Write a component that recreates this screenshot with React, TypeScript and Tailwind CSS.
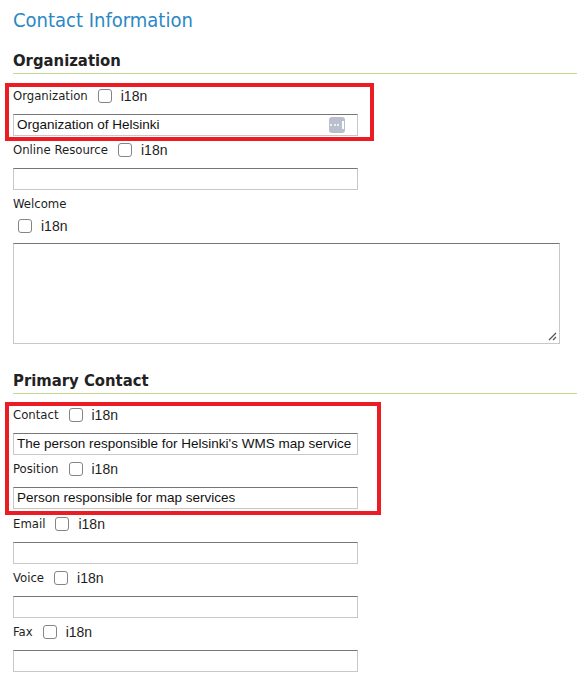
import React from "react";

const LABEL_FONT = "font-['DejaVu_Sans_Condensed','Liberation_Sans',sans-serif]";

function Check() {
  return <span className="inline-block w-[14px] h-[14px] rounded-[3px] border border-[#858585] bg-white" />;
}

function FieldLabel({ label }: { label: string }) {
  return (
    <div className={`flex items-center h-[18px] text-[13px] text-[#1e1e1e] ${LABEL_FONT}`}>
      <span>{label}</span>
      <span className="ml-[10px] mr-[9px] flex"><Check /></span>
      <span className="font-['Liberation_Sans',sans-serif] text-[14px]">i18n</span>
    </div>
  );
}

function TextBox({ value, picker }: { value?: string; picker?: boolean }) {
  return (
    <div className="relative w-[345px] h-[22px] border border-[#c8c8c8] border-t-[#767676] bg-white flex items-center px-[3px] text-[13.5px] text-[#111] font-['Liberation_Sans',sans-serif]">
      {value}
      {picker && (
        <span className="absolute right-[12px] top-[2px] w-[16px] h-[16px] rounded-[3px] bg-[#b9bfcc] flex items-center justify-center gap-[1.5px]">
          <span className="w-[2px] h-[2px] bg-white rounded-full" />
          <span className="w-[2px] h-[2px] bg-white rounded-full" />
          <span className="w-[2px] h-[2px] bg-white rounded-full" />
          <span className="ml-[1px] w-[2px] h-[8px] bg-white" />
        </span>
      )}
    </div>
  );
}

function Field({ label, value, picker }: { label: string; value?: string; picker?: boolean }) {
  return (
    <div className="flex flex-col gap-[9px]">
      <FieldLabel label={label} />
      <TextBox value={value} picker={picker} />
    </div>
  );
}

function SectionHead({ title }: { title: string }) {
  return (
    <div className={`ml-[13px] border-b border-[#c2da94] pb-[2px] text-[16.5px] leading-[20px] font-bold text-[#222] ${LABEL_FONT}`}>
      {title}
    </div>
  );
}

export default function App() {
  return (
    <div className="w-[577px] h-[685px] bg-white overflow-hidden pt-[7px]">
      <h1 className={`ml-[13px] text-[20px] leading-[26px] text-[#2a88c5] ${LABEL_FONT}`}>Contact Information</h1>

      <div className="mt-[18px]">
        <SectionHead title="Organization" />
      </div>

      <div className="ml-[5px] mt-[9px] w-[369px] border-4 border-[#ec1c24] pl-[4px] pb-[1px]">
        <Field label="Organization" value="Organization of Helsinki" picker />
      </div>

      <div className="ml-[13px] flex flex-col">
        <Field label="Online Resource" />
        <div className={`mt-[5px] h-[18px] flex items-center text-[13px] text-[#1e1e1e] ${LABEL_FONT}`}>Welcome</div>
        <div className={`mt-[4px] ml-[5px] flex items-center h-[18px] text-[13px] ${LABEL_FONT}`}>
          <Check />
          <span className="ml-[9px] font-['Liberation_Sans',sans-serif] text-[14px] text-[#1e1e1e]">i18n</span>
        </div>
        <div className="relative mt-[8px] w-[547px] h-[101px] border border-[#c8c8c8] border-t-[#767676] bg-white">
          <svg className="absolute right-[2px] bottom-[2px]" width="10" height="10" viewBox="0 0 10 10">
            <path d="M9 2 L2 9 M9 6 L6 9" stroke="#555" strokeWidth="1.3" />
          </svg>
        </div>
      </div>

      <div className="mt-[27px]">
        <SectionHead title="Primary Contact" />
      </div>

      <div className="ml-[5px] mt-[8px] w-[376px] border-4 border-[#ec1c24] pl-[4px] pb-[2px] flex flex-col gap-[5px]">
        <Field label="Contact" value="The person responsible for Helsinki's WMS map service" />
        <Field label="Position" value="Person responsible for map services" />
      </div>

      <div className="ml-[13px] flex flex-col gap-[5px]">
        <Field label="Email" />
        <Field label="Voice" />
        <Field label="Fax" />
      </div>
    </div>
  );
}
